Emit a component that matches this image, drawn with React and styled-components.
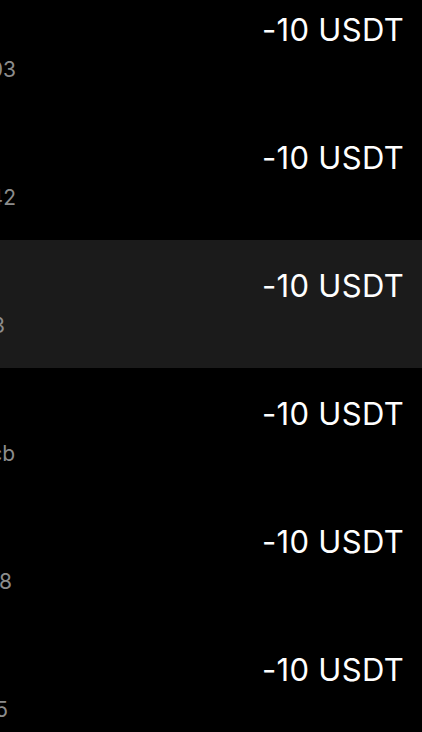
import React from "react";
import styled, { createGlobalStyle } from "styled-components";

// the screenshot is a crop of a wider list: the left column runs off the
// left edge, only the tail of each hash shows
const rows = [
  { title: "Send", hash: "0x7a1e4f…c903", amount: "-10 USDT", tail: 0 },
  { title: "Send", hash: "0x4b9f02…e842", amount: "-10 USDT", tail: 0 },
  { title: "Send", hash: "0x92dd7c…a1b3", amount: "-10 USDT", tail: 11, active: true },
  { title: "Send", hash: "0x3c0a5e…f7cb", amount: "-10 USDT", tail: 1 },
  { title: "Send", hash: "0xe51b33…9d08", amount: "-10 USDT", tail: 4 },
  { title: "Send", hash: "0x08fa61…b2e5", amount: "-10 USDT", tail: 8 },
];

function App() {
  return (
    <>
      <Global />
      <Viewport>
        <List>
          {rows.map((row, i) => (
            <Row key={i} $active={row.active}>
              <Info>
                <Title>{row.title}</Title>
                <Hash $tail={row.tail}>{row.hash}</Hash>
              </Info>
              <Amount>{row.amount}</Amount>
            </Row>
          ))}
        </List>
      </Viewport>
    </>
  );
}

const Global = createGlobalStyle`
  html, body {
    margin: 0;
    background: #000;
    overflow: hidden;
  }
  * {
    box-sizing: border-box;
  }
`;

const Viewport = styled.div`
  width: 422px;
  height: 732px;
  overflow: hidden;
  font-family: Inter, "Liberation Sans", sans-serif;
`;

const List = styled.div`
  width: 642px;
  margin: -16px 0 0 -220px;
  display: flex;
  flex-direction: column;
`;

const Row = styled.div`
  height: 128px;
  padding: 28px 18px 0 16px;
  display: flex;
  justify-content: space-between;
  align-items: flex-start;
  background: ${(p) => (p.$active ? "#1b1b1b" : "#000")};
`;

const Info = styled.div`
  width: 220px;
  display: flex;
  flex-direction: column;
  gap: 8px;
`;

const Title = styled.div`
  font-size: 30px;
  line-height: 36px;
  color: #fff;
`;

const Hash = styled.div`
  font-size: 21px;
  line-height: 28px;
  color: #8c8c8c;
  text-align: right;
  white-space: nowrap;
  padding-right: ${(p) => p.$tail}px;
`;

const Amount = styled.div`
  font-size: 31px;
  line-height: 36px;
  font-weight: 400;
  letter-spacing: 0.3px;
  color: #fff;
`;

export default App;
